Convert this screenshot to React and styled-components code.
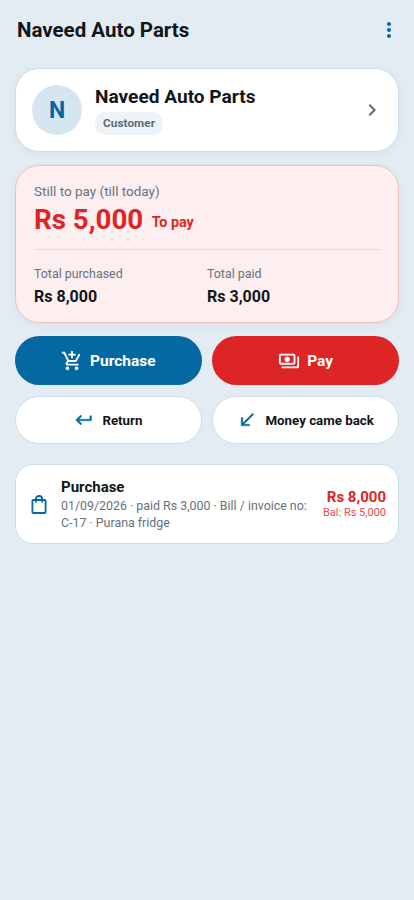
import React from 'react';
import styled, { createGlobalStyle } from 'styled-components';
import {
  MdMoreVert,
  MdChevronRight,
  MdOutlineAddShoppingCart,
  MdOutlinePayments,
  MdKeyboardReturn,
  MdCallReceived,
} from 'react-icons/md';

const GlobalStyle = createGlobalStyle`
  * { box-sizing: border-box; }
  html, body { margin: 0; padding: 0; }
  body {
    background: #e3ecf2;
    font-family: Roboto, "Liberation Sans", sans-serif;
    color: #12161a;
  }
`
const Page = styled.div`
  min-height: 900px;
  background: #e3ecf2;
`
const TopBar = styled.header`
  height: 60px;
  padding: 0 13px 0 17px;
  display: flex;
  align-items: center;
  justify-content: space-between;
`
const PageTitle = styled.h1`
  margin: 0;
  font-size: 20.5px;
  font-weight: 700;
`
const MenuButton = styled.div`
  display: flex;
  color: #0468a3;
  font-size: 24px;
`
const Content = styled.main`
  padding: 8px 15px 0;
  display: flex;
  flex-direction: column;
`
const ProfileCard = styled.section`
  height: 84px;
  padding: 0 14px 0 16px;
  background: #fff;
  border: 1px solid #cfdfe9;
  border-radius: 24px;
  display: flex;
  align-items: center;
  box-shadow: 0 2px 8px rgba(30, 70, 100, 0.06);
`
const Avatar = styled.div`
  width: 50px;
  height: 50px;
  border-radius: 50%;
  background: #d6e6f0;
  color: #0468a3;
  font-size: 23px;
  font-weight: 700;
  display: flex;
  align-items: center;
  justify-content: center;
`
const ProfileText = styled.div`
  flex: 1;
  margin-left: 13px;
`
const ProfileName = styled.div`
  font-size: 19.1px;
  font-weight: 700;
  line-height: 24px;
`
const Badge = styled.span`
  display: inline-block;
  margin-top: 3px;
  padding: 0 8px;
  height: 23px;
  line-height: 23px;
  background: #edf3f7;
  border-radius: 10px;
  color: #5c6b77;
  font-size: 11.7px;
  font-weight: 700;
  letter-spacing: 0.1px;
`
const ChevronWrap = styled.div`
  display: flex;
  color: #5c6b77;
  font-size: 24px;
`
const BalanceCard = styled.section`
  margin-top: 13px;
  height: 158px;
  padding: 17px 18px 0;
  background: #fdeeef;
  border: 1px solid #f6bcbc;
  border-radius: 24px;
  box-shadow: 0 2px 8px rgba(30, 70, 100, 0.06);
`
const BalanceLabel = styled.div`
  font-size: 13.5px;
  line-height: 17px;
  color: #66727c;
`
const BalanceRow = styled.div`
  margin-top: 2px;
  display: flex;
  align-items: center;
  color: #dd2525;
  font-weight: 700;
`
const BalanceAmount = styled.span`
  font-size: 27.7px;
  line-height: 36px;
`
const BalanceTag = styled.span`
  margin-left: 8.5px;
  margin-top: 4px;
  font-size: 14.3px;
`
const Divider = styled.div`
  margin-top: 11px;
  height: 1px;
  background: #dfdce2;
`
const Totals = styled.div`
  margin-top: 16px;
  display: grid;
  grid-template-columns: 173px 1fr;
`
const TotalLabel = styled.div`
  font-size: 12.4px;
  line-height: 16px;
  color: #66727c;
`
const TotalValue = styled.div`
  margin-top: 5px;
  font-size: 16px;
  line-height: 20px;
  font-weight: 700;
`
const ButtonGrid = styled.div`
  margin-top: 13px;
  display: grid;
  grid-template-columns: 1fr 1fr;
  gap: 11px 10.5px;
`
const PrimaryButton = styled.button`
  height: 49px;
  border: 0;
  padding: 0;
  border-radius: 25px;
  background: ${(p) => p.$bg};
  color: #fff;
  font-family: inherit;
  font-size: 15.5px;
  font-weight: 700;
  display: flex;
  align-items: center;
  justify-content: center;
  gap: 7px;
  svg { font-size: 22px; }
`
const SecondaryButton = styled.button`
  height: 48px;
  padding: 0;
  border: 1px solid #cfdfe9;
  border-radius: 24px;
  background: #fff;
  color: #12161a;
  font-family: inherit;
  font-size: 13.3px;
  font-weight: 700;
  display: flex;
  align-items: center;
  justify-content: center;
  gap: 8px;
  svg {
    font-size: 20px;
    color: #0468a3;
  }
  svg path:not([fill='none']) {
    stroke: currentColor;
    stroke-width: 0.5;
  }
`
const EntryCard = styled.section`
  margin-top: 20px;
  height: 80px;
  padding: 0 12px 0 15px;
  background: #fff;
  border: 1px solid #cfdfe9;
  border-radius: 18px;
  display: flex;
  align-items: center;
`
const EntryIcon = styled.svg`
  flex: none;
  width: 16px;
  height: 19px;
  color: #0468a3;
`
const EntryBody = styled.div`
  flex: 1;
  margin-left: 14px;
  min-width: 0;
`
const EntryTitle = styled.div`
  font-size: 15px;
  font-weight: 700;
  line-height: 18px;
`
const EntryMeta = styled.div`
  margin-top: 1px;
  font-size: 12.4px;
  line-height: 17px;
  color: #66727c;
`
const EntryAmounts = styled.div`
  margin-left: 12px;
  text-align: right;
  white-space: nowrap;
  color: #dd2525;
`
const EntryAmount = styled.div`
  font-size: 15px;
  line-height: 18px;
  font-weight: 700;
`
const EntryBalance = styled.div`
  font-size: 11px;
  line-height: 14px;
  color: #e84c4c;
`

const App = () => {
  return (
    <Page>
      <GlobalStyle />
      <TopBar>
        <PageTitle>Naveed Auto Parts</PageTitle>
        <MenuButton><MdMoreVert /></MenuButton>
      </TopBar>
      <Content>
        <ProfileCard>
          <Avatar>N</Avatar>
          <ProfileText>
            <ProfileName>Naveed Auto Parts</ProfileName>
            <Badge>Customer</Badge>
          </ProfileText>
          <ChevronWrap><MdChevronRight /></ChevronWrap>
        </ProfileCard>
        <BalanceCard>
          <BalanceLabel>Still to pay (till today)</BalanceLabel>
          <BalanceRow>
            <BalanceAmount>Rs 5,000</BalanceAmount>
            <BalanceTag>To pay</BalanceTag>
          </BalanceRow>
          <Divider />
          <Totals>
            <div>
              <TotalLabel>Total purchased</TotalLabel>
              <TotalValue>Rs 8,000</TotalValue>
            </div>
            <div>
              <TotalLabel>Total paid</TotalLabel>
              <TotalValue>Rs 3,000</TotalValue>
            </div>
          </Totals>
        </BalanceCard>
        <ButtonGrid>
          <PrimaryButton $bg="#0468a3"><MdOutlineAddShoppingCart />Purchase</PrimaryButton>
          <PrimaryButton $bg="#dd2525"><MdOutlinePayments />Pay</PrimaryButton>
          <SecondaryButton><MdKeyboardReturn />Return</SecondaryButton>
          <SecondaryButton><MdCallReceived />Money came back</SecondaryButton>
        </ButtonGrid>
        <EntryCard>
          <EntryIcon viewBox="0 0 16 19" fill="none" stroke="currentColor" strokeWidth="1.8">
            <rect x="1.4" y="5" width="13.2" height="13" rx="1" />
            <path d="M4.8 7.5V4.2a3.2 3.2 0 0 1 6.4 0v3.3" />
          </EntryIcon>
          <EntryBody>
            <EntryTitle>Purchase</EntryTitle>
            <EntryMeta>01/09/2026 · paid Rs 3,000 · Bill / invoice no: C-17 · Purana fridge</EntryMeta>
          </EntryBody>
          <EntryAmounts>
            <EntryAmount>Rs 8,000</EntryAmount>
            <EntryBalance>Bal: Rs 5,000</EntryBalance>
          </EntryAmounts>
        </EntryCard>
      </Content>
    </Page>
  )
}

export default App
